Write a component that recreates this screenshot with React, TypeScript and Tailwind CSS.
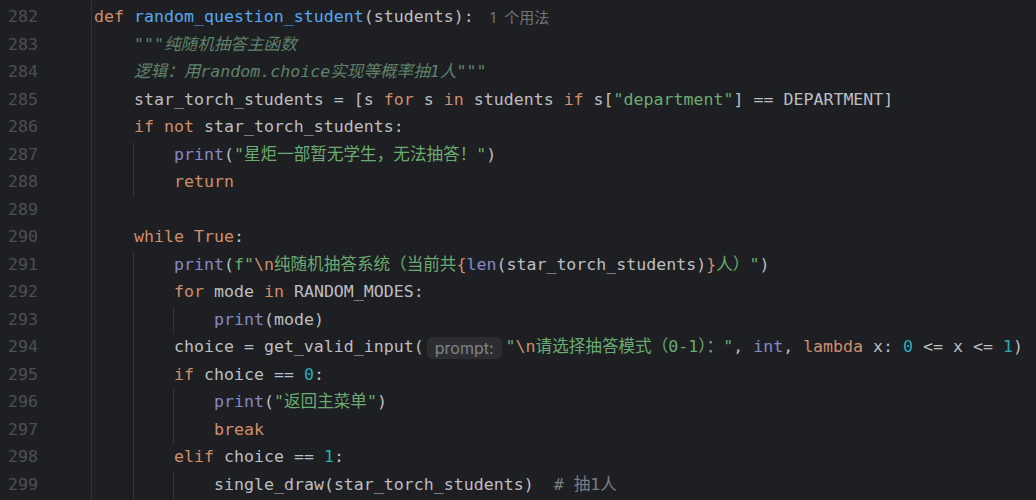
type Kind = 't' | 'k' | 'f' | 's' | 'd' | 'n' | 'b' | 'c' | 'e' | 'hint' | 'usage';
type Tok = [Kind, string];

interface Line {
  no: number;
  indent: number;
  guides: number[];
  toks: Tok[];
}

const color: Record<Kind, string> = {
  t: 'text-[#bcbec4]',
  k: 'text-[#cf8e6d]',
  f: 'text-[#56a8f5]',
  s: 'text-[#6aab73]',
  d: 'text-[#5f826b] italic',
  n: 'text-[#2aacb8]',
  b: 'text-[#8888c6]',
  c: 'text-[#7a7e85]',
  e: 'text-[#cf8e6d]',
  hint: '',
  usage: '',
};

const LINES: Line[] = [
  { no: 282, indent: 0, guides: [], toks: [['k', 'def'], ['t', ' '], ['f', 'random_question_student'], ['t', '(students):'], ['usage', '1 个用法']] },
  { no: 283, indent: 1, guides: [], toks: [['d', '"""纯随机抽答主函数']] },
  { no: 284, indent: 1, guides: [], toks: [['d', '逻辑：用random.choice实现等概率抽1人"""']] },
  {
    no: 285, indent: 1, guides: [],
    toks: [['t', 'star_torch_students = [s '], ['k', 'for'], ['t', ' s '], ['k', 'in'], ['t', ' students '], ['k', 'if'], ['t', ' s['], ['s', '"department"'], ['t', '] == DEPARTMENT]']],
  },
  { no: 286, indent: 1, guides: [], toks: [['k', 'if not'], ['t', ' star_torch_students:']] },
  { no: 287, indent: 2, guides: [1], toks: [['b', 'print'], ['t', '('], ['s', '"星炬一部暂无学生，无法抽答！"'], ['t', ')']] },
  { no: 288, indent: 2, guides: [1], toks: [['k', 'return']] },
  { no: 289, indent: 0, guides: [], toks: [] },
  { no: 290, indent: 1, guides: [], toks: [['k', 'while True'], ['t', ':']] },
  {
    no: 291, indent: 2, guides: [1],
    toks: [['b', 'print'], ['t', '('], ['s', 'f"'], ['e', '\\n'], ['s', '纯随机抽答系统（当前共'], ['e', '{'], ['b', 'len'], ['t', '(star_torch_students)'], ['e', '}'], ['s', '人）"'], ['t', ')']],
  },
  { no: 292, indent: 2, guides: [1], toks: [['k', 'for'], ['t', ' mode '], ['k', 'in'], ['t', ' RANDOM_MODES:']] },
  { no: 293, indent: 3, guides: [1, 2], toks: [['b', 'print'], ['t', '(mode)']] },
  {
    no: 294, indent: 2, guides: [1],
    toks: [
      ['t', 'choice = get_valid_input('], ['hint', 'prompt:'], ['s', '"'], ['e', '\\n'], ['s', '请选择抽答模式（0-1）："'],
      ['t', ', '], ['b', 'int'], ['t', ', '], ['k', 'lambda'], ['t', ' x: '], ['n', '0'], ['t', ' <= x <= '], ['n', '1'], ['t', ')'],
    ],
  },
  { no: 295, indent: 2, guides: [1], toks: [['k', 'if'], ['t', ' choice == '], ['n', '0'], ['t', ':']] },
  { no: 296, indent: 3, guides: [1, 2], toks: [['b', 'print'], ['t', '('], ['s', '"返回主菜单"'], ['t', ')']] },
  { no: 297, indent: 3, guides: [1, 2], toks: [['k', 'break']] },
  { no: 298, indent: 2, guides: [1], toks: [['k', 'elif'], ['t', ' choice == '], ['n', '1'], ['t', ':']] },
  { no: 299, indent: 3, guides: [1, 2], toks: [['t', 'single_draw(star_torch_students)  '], ['c', '# 抽1人']] },
];

const Token = ({ tok }: { tok: Tok }) => {
  const [kind, text] = tok;
  if (kind === 'hint') {
    return (
      <span className="mr-[4px] ml-[3px] inline-flex h-[22px] items-center rounded-[5px] bg-[#2b2d30] px-[8px] font-['Inter','Noto_Sans',sans-serif] text-[16px] leading-none text-[#7f838a]">
        {text}
      </span>
    );
  }
  if (kind === 'usage') {
    return (
      <span className="ml-[16px] font-['Inter','Noto_Sans','Noto_Sans_CJK_SC',sans-serif] text-[15px] whitespace-pre text-[#6f737a]">
        {'1  个用法'}
      </span>
    );
  }
  return <span className={color[kind]}>{text}</span>;
};

const CodeLine = ({ line }: { line: Line }) => (
  <div className="flex h-[27.5px] items-center whitespace-pre">
    {Array.from({ length: line.indent }).map((_, i) => (
      <span
        key={i}
        className={`inline-block h-full w-[40px] shrink-0 ${
          line.guides.includes(i) && i > 0 ? 'shadow-[-1px_0_0_#34363a]' : ''
        }`}
      />
    ))}
    {line.guides.includes(line.indent) && <span className="h-full shadow-[-1px_0_0_#34363a]" />}
    {line.toks.map((tok, i) => (
      <Token key={i} tok={tok} />
    ))}
  </div>
);

export default function App() {
  return (
    <div className="flex h-[500px] w-[1036px] overflow-hidden bg-[#1e1f22] font-['DejaVu_Sans_Mono','Noto_Sans_CJK_SC',monospace] text-[16.6px]">
      {/* Gutter */}
      <div className="w-[92px] shrink-0 border-r border-[#303236] pt-[4px] pr-[53px]">
        {LINES.map((l) => (
          <div key={l.no} className="flex h-[27.5px] items-center justify-end text-[#4b5059]">
            {l.no}
          </div>
        ))}
      </div>

      {/* Code */}
      <div className="min-w-0 flex-1 pt-[4px] pl-[2px]">
        {LINES.map((l) => (
          <CodeLine key={l.no} line={l} />
        ))}
      </div>
    </div>
  );
}
